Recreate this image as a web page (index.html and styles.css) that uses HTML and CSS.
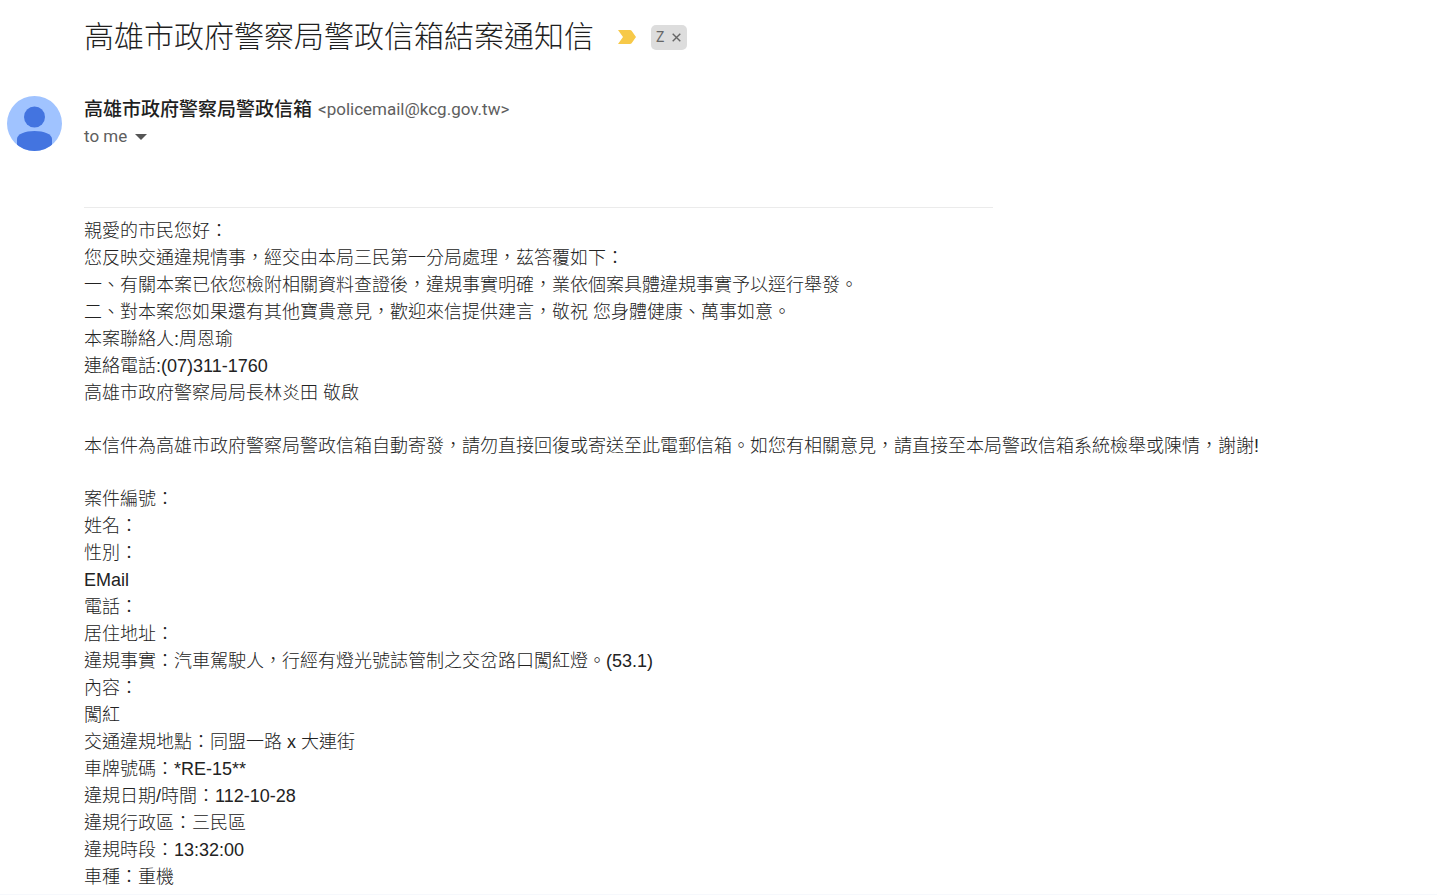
FILE: index.html
```
<!DOCTYPE html>
<html lang="zh-TW">

<head>
  <meta charset="UTF-8">
  <meta name="viewport" content="width=device-width, initial-scale=1.0">
  <title>高雄市政府警察局警政信箱結案通知信</title>
  <link rel="stylesheet" href="styles.css">
</head>

<body>
  <main class="mail">
    <header class="subject">
      <h1>高雄市政府警察局警政信箱結案通知信</h1>
      <button class="important" type="button" aria-label="Important">
        <svg width="18" height="14" viewBox="0 0 18 14"><path d="M0 0h12q1 0 1.600.800L18 7l-4.400 6.200Q13 14 12 14H0l5-7z" fill="#f7c948"/></svg>
      </button>
      <div class="label">
        <span>Z</span>
        <button type="button" aria-label="Remove label Z">
          <svg width="9" height="9" viewBox="0 0 9 9"><path d="M.700.700l7.600 7.600M8.300.700L.700 8.300" stroke="#666" stroke-width="1.400"/></svg>
        </button>
      </div>
    </header>

    <section class="sender">
      <svg class="avatar" width="55" height="55" viewBox="0 0 55 55">
        <defs>
          <clipPath id="circle"><circle cx="27.500" cy="27.500" r="27.500"/></clipPath>
        </defs>
        <g clip-path="url(#circle)">
          <rect width="55" height="55" fill="#a0c3ff"/>
          <circle cx="27.500" cy="21" r="10.500" fill="#4374e0"/>
          <path d="M10 55V43C10 38 18 35 27.500 35S45 38 45 43V55z" fill="#4374e0"/>
        </g>
      </svg>
      <div class="people">
        <div class="from">
          <h2>高雄市政府警察局警政信箱</h2>
          <span>&lt;policemail@kcg.gov.tw&gt;</span>
        </div>
        <button class="details" type="button">
          to me
          <svg width="12" height="6" viewBox="0 0 12 6"><path d="M0 0h12L6 6z" fill="#555"/></svg>
        </button>
      </div>
    </section>

    <article class="message">
      <hr>
      <p>
        親愛的市民您好：<br>
        您反映交通違規情事，經交由本局三民第一分局處理，茲答覆如下：<br>
        一、有關本案已依您檢附相關資料查證後，違規事實明確，業依個案具體違規事實予以逕行舉發。<br>
        二、對本案您如果還有其他寶貴意見，歡迎來信提供建言，敬祝 您身體健康、萬事如意。<br>
        本案聯絡人:周恩瑜<br>
        連絡電話:(07)311-1760<br>
        高雄市政府警察局局長林炎田 敬啟
      </p>
      <p>本信件為高雄市政府警察局警政信箱自動寄發，請勿直接回復或寄送至此電郵信箱。如您有相關意見，請直接至本局警政信箱系統檢舉或陳情，謝謝!</p>
      <p>
        案件編號：<br>
        姓名：<br>
        性別：<br>
        EMail<br>
        電話：<br>
        居住地址：<br>
        違規事實：汽車駕駛人，行經有燈光號誌管制之交岔路口闖紅燈。(53.1)<br>
        內容：<br>
        闖紅<br>
        交通違規地點：同盟一路 x 大連街<br>
        車牌號碼：*RE-15**<br>
        違規日期/時間：112-10-28<br>
        違規行政區：三民區<br>
        違規時段：13:32:00<br>
        車種：重機
      </p>
    </article>
  </main>
</body>

</html>
```
FILE: styles.css
```
* {
  box-sizing: border-box;
}

body {
  margin: 0;
  background: #fff;
  color: #222;
  font-family: "Liberation Sans", "Noto Sans CJK TC", sans-serif;
}

button {
  padding: 0;
  border: none;
  background: none;
  color: inherit;
  font: inherit;
  cursor: pointer;
}

svg {
  display: block;
}

.mail {
  padding: 15px 0 3px;
  border-bottom: 2px solid #f6f8fc;
}

.subject {
  display: flex;
  align-items: center;
  padding-left: 84px;
}

.subject h1 {
  margin: 0 24px 0 0;
  font-size: 30px;
  font-weight: 300;
  line-height: 44px;
  color: #1f1f1f;
}

.important {
  margin-right: 15px;
}

.label {
  display: flex;
  align-items: center;
  gap: 8px;
  height: 25px;
  padding: 0 6px 0 5px;
  border-radius: 5px;
  background: #ddd;
  color: #666;
  font-family: Roboto, sans-serif;
  font-size: 14px;
}

.sender {
  display: flex;
  gap: 22px;
  padding: 37px 0 0 7px;
}

.people {
  display: flex;
  flex-direction: column;
  align-items: flex-start;
  color: #5e5e5e;
  font-family: Roboto, "Noto Sans CJK TC", sans-serif;
  font-size: 17px;
}

.from {
  display: flex;
  align-items: center;
  gap: 6px;
  line-height: 27px;
}

.from h2 {
  margin: 0;
  font-size: 19px;
  font-weight: 500;
  color: #1f1f1f;
}

.details {
  display: flex;
  align-items: center;
  gap: 8px;
  line-height: 27px;
}

.message {
  padding: 56px 24px 0 84px;
  font-size: 18px;
  font-weight: 300;
  line-height: 27px;
}

.message hr {
  max-width: 909px;
  margin: 0 0 10px;
  border: none;
  border-top: 1px solid #ebebeb;
}

.message p {
  margin: 0 0 26px;
}

.message p:last-child {
  margin-bottom: 0;
}
```
